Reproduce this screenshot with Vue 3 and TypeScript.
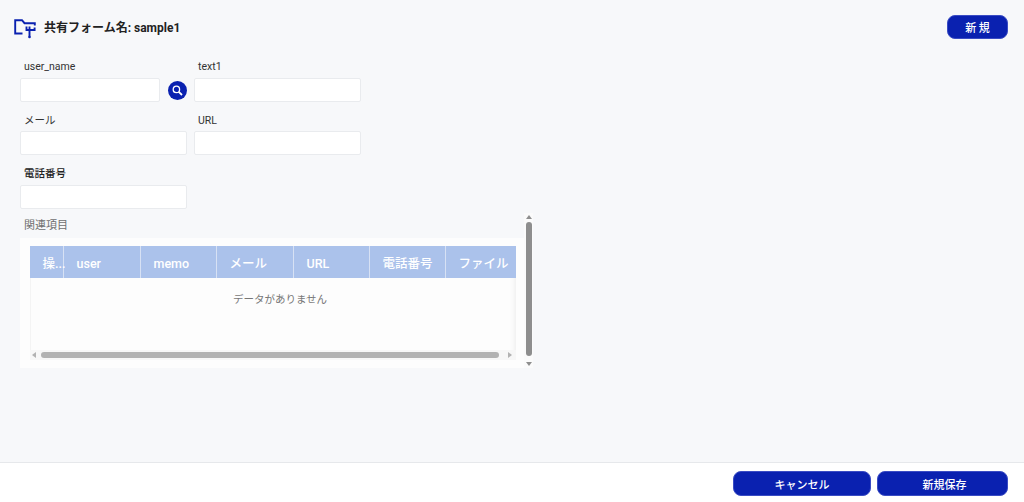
<script setup lang="ts">
interface Column { label: string; width: number }
const columns: Column[] = [
  { label: '操...', width: 34 },
  { label: 'user', width: 77 },
  { label: 'memo', width: 76 },
  { label: 'メール', width: 77 },
  { label: 'URL', width: 76 },
  { label: '電話番号', width: 76 },
  { label: 'ファイル', width: 71 },
]
</script>

<template>
  <div class="page">
    <header class="head">
      <div class="title">
        <svg class="logo" width="22" height="20" viewBox="0 0 22 20" fill="none" stroke="#0a21b0" stroke-width="1.9">
          <path d="M8.5 14.5H1.2V1.2H8L10.5 4.2H20.8V6.5" />
          <path d="M12.5 7.5V11H20.6V8.5M15.5 7.5V17.5" />
          <circle cx="15.5" cy="18" r="1.3" fill="#0a21b0" stroke="none" />
        </svg>
        <span>共有フォーム名: sample1</span>
      </div>
      <button class="btn small">新 規</button>
    </header>

    <main class="body">
      <section class="form">
        <div class="row r1">
          <div class="field">
            <label class="lab latin">user_name</label>
            <div class="with-icon">
              <input class="inp" />
              <span class="search">
                <svg width="11" height="11" viewBox="0 0 11 11" fill="none" stroke="#fff">
                  <circle cx="4.4" cy="4.4" r="3.2" stroke-width="1.3" />
                  <path d="M6.8 6.8L10 10" stroke-width="1.8" />
                </svg>
              </span>
            </div>
          </div>
          <div class="field">
            <label class="lab latin">text1</label>
            <input class="inp" />
          </div>
        </div>
        <div class="row r2">
          <div class="field">
            <label class="lab">メール</label>
            <input class="inp" />
          </div>
          <div class="field">
            <label class="lab">URL</label>
            <input class="inp" />
          </div>
        </div>
        <div class="row r3">
          <div class="field">
            <label class="lab strong">電話番号</label>
            <input class="inp" />
          </div>
        </div>
      </section>

      <section class="related">
        <div class="related-main">
          <div class="rel-title">関連項目</div>
          <div class="card">
            <div class="table">
              <div class="thead">
                <div v-for="c in columns" :key="c.label" class="th" :style="{ width: c.width + 'px' }">{{ c.label }}</div>
              </div>
              <div class="empty">データがありません</div>
              <div class="hbar">
                <i class="arr left"></i>
                <b class="hthumb"></b>
                <i class="arr right"></i>
              </div>
            </div>
          </div>
        </div>
        <div class="vbar">
          <i class="arr up"></i>
          <b class="vthumb"></b>
          <i class="arr down"></i>
        </div>
      </section>
    </main>

    <footer class="foot">
      <button class="btn cancel">キャンセル</button>
      <button class="btn save">新規保存</button>
    </footer>
  </div>
</template>

<style>
html, body { margin: 0; background: #f7f8fa; }
</style>

<style scoped>
.page {
  width: 1024px;
  height: 502px;
  display: flex;
  flex-direction: column;
  overflow: hidden;
  font-family: Roboto, "Noto Sans CJK JP", sans-serif;
  color: #262626;
}
.head {
  height: 54px;
  flex: none;
  box-sizing: border-box;
  padding: 15px 16px 0 14px;
  display: flex;
  justify-content: space-between;
  align-items: flex-start;
}
.title {
  display: flex;
  align-items: center;
  gap: 10px;
  height: 22px;
  font-size: 12px;
  font-weight: 700;
  color: #222;
}
.logo { flex: none; margin-top: 5px; margin-right: -2px; }
.btn {
  border: 1px solid #3a4cc4;
  background: #0a21b0;
  color: #fff;
  font-family: inherit;
  font-size: 11px;
  font-weight: 500;
  border-radius: 8px;
  padding: 0;
}
.small { width: 61px; height: 24px; }
.body { flex: 1; padding: 0 0 0 20px; min-height: 0; }
.form { display: flex; flex-direction: column; width: 341px; }
.row { display: flex; gap: 7px; }
.r1 { height: 48px; }
.r2 { height: 48px; margin-top: 5px; }
.r3 { height: 48px; margin-top: 6px; }
.field { width: 167px; display: flex; flex-direction: column; }
.lab {
  height: 24px;
  line-height: 28px;
  padding-left: 4px;
  font-size: 10.5px;
  color: #333;
}
.lab.latin { line-height: 26px; }
.lab.strong { font-weight: 500; color: #222; line-height: 26px; }
.inp {
  box-sizing: border-box;
  width: 100%;
  height: 24px;
  border: 1px solid #e9ebee;
  border-radius: 2px;
  background: #fff;
  padding: 0;
  outline: none;
}
.with-icon { display: flex; align-items: center; gap: 8px; }
.with-icon .inp { width: 140px; flex: none; }
.search {
  width: 19px;
  height: 19px;
  border-radius: 50%;
  background: #0a21b0;
  flex: none;
  display: flex;
  align-items: center;
  justify-content: center;
}
.related {
  display: flex;
  margin-top: 4px;
  width: 513px;
}
.related-main { width: 504px; flex: none; }
.rel-title {
  height: 25px;
  line-height: 25px;
  padding-left: 4px;
  font-size: 11px;
  color: #6f6f6f;
}
.card {
  box-sizing: border-box;
  height: 130px;
  background: #fdfdfd;
  padding: 8px 8px 8px 10px;
}
.table {
  height: 114px;
  display: flex;
  flex-direction: column;
  box-shadow: inset 1px 0 0 #f4f4f4, inset -6px 0 6px -6px #e6e6e6;
}
.thead { display: flex; height: 32px; background: #abc2eb; flex: none; }
.th {
  box-sizing: border-box;
  flex: none;
  height: 32px;
  line-height: 35px;
  padding-left: 12.5px;
  border-right: 1px solid #d7e1f4;
  color: #fff;
  font-size: 12.5px;
  font-weight: 500;
  white-space: nowrap;
}
.th:last-child { border-right: 0; }
.empty {
  height: 42px;
  line-height: 44px;
  padding-left: 14px;
  text-align: center;
  font-size: 10.5px;
  color: #777;
}
.hbar {
  margin-top: auto;
  height: 10px;
  background: #f7f7f7;
  display: flex;
  align-items: center;
  justify-content: space-between;
  padding: 0 4px 0 2px;
  box-sizing: border-box;
  position: relative;
}
.hthumb { position: absolute; left: 11px; top: 2px; width: 458px; height: 6px; border-radius: 3px; background: #b2b2b2; }
.vbar {
  width: 9px;
  height: 155px;
  box-sizing: border-box;
  padding: 2px 0;
  background: #fbfbfb;
  display: flex;
  flex-direction: column;
  align-items: center;
  justify-content: space-between;
  position: relative;
}
.vthumb { position: absolute; top: 9px; left: 2px; width: 6px; height: 134px; border-radius: 3px; background: #8e8e8e; }
.arr { width: 0; height: 0; display: block; }
.up { border: 3px solid transparent; border-bottom: 4px solid #8e8e8e; border-top: 0; }
.down { border: 3px solid transparent; border-top: 4px solid #8e8e8e; border-bottom: 0; }
.left { border: 3px solid transparent; border-right: 4px solid #b2b2b2; border-left: 0; }
.right { border: 3px solid transparent; border-left: 4px solid #b2b2b2; border-right: 0; }
.foot {
  height: 40px;
  flex: none;
  box-sizing: border-box;
  background: #fff;
  border-top: 1px solid #e6e8eb;
  padding: 8px 16px 0 0;
  display: flex;
  justify-content: flex-end;
  gap: 6px;
}
.cancel { width: 138px; height: 25px; }
.save { width: 131px; height: 25px; padding-left: 4px; }
</style>
